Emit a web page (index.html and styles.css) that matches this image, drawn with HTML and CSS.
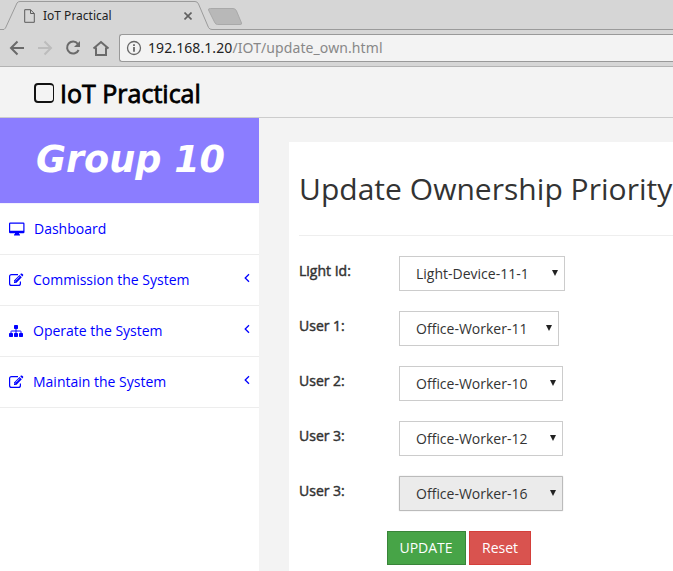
FILE: index.html
```html
<!DOCTYPE html>
<html lang="en">
<head>
<meta charset="utf-8">
<title>IoT Practical</title>
<link rel="stylesheet" href="styles.css">
</head>
<body>
<div class="browser">
  <div class="tabs">
    <svg class="tab-shape" width="673" height="30" viewBox="0 0 673 30" fill="none">
      <path d="M0 29.500H4L5.500 28L17 3Q18 1.500 20 1.500H195Q197.500 1.500 198.500 4L208.500 27.500Q209.500 29.500 212 29.500H673" stroke="#9b9b9b"/>
      <path d="M210.500 8.500H233Q235.500 8.500 236.500 11L241.500 23Q242 24.500 240 24.500H217.500Q215.500 24.500 214.500 22L208.500 10Q208 8.500 210.500 8.500Z" fill="#b8b8b8" stroke="#a9a9a9"/>
    </svg>
    <div class="tab">
      <svg width="11" height="14" viewBox="0 0 11 14" fill="none" stroke="#5c5c5c"><path d="M.7.700H6.500L10.300 4.500V13.300H.7ZM6.500.7V4.500H10.300"/></svg>
      <span class="tab-title">IoT Practical</span>
      <svg class="close" width="8" height="8" viewBox="0 0 8 8" stroke="#606060" stroke-width="1.600"><path d="M.5.500 7.500 7.500M7.500.500.500 7.500"/></svg>
    </div>
  </div>
  <div class="toolbar">
    <svg width="112" height="28" viewBox="0 0 112 28" fill="none" stroke="#6a6a6a" stroke-width="2">
      <path d="M24 14H11M17.500 7.500 11 14 17.500 20.500"/>
      <path stroke="#bcbcbc" d="M38 14H51M44.500 7.500 51 14 44.500 20.500"/>
      <path d="M77.800 9.800A6 6 0 1 0 78.600 16"/>
      <path fill="#6a6a6a" stroke="none" d="M80 7V13H74Z"/>
      <path d="M93.500 14.500 101 8 108.500 14.500M96 13.500V21H106V13.500"/>
    </svg>
    <div class="address">
      <svg width="16" height="16" viewBox="0 0 16 16" fill="none" stroke="#666" stroke-width="1.300"><circle cx="8" cy="8" r="6.500"/><path stroke-width="1.800" d="M8 7V11.700M8 4.200V6"/></svg>
      <span class="url"><b>192.168.1.20</b>/IOT/update_own.html</span>
    </div>
  </div>
</div>
<header class="brand"><i class="box"></i><span>IoT Practical</span></header>
<div class="page">
  <aside class="sidebar">
    <div class="banner"><span>Group 10</span></div>
    <nav>
      <a class="item dash"><svg width="16" height="14" viewBox="0 0 16 14" fill="#00f"><path fill-rule="evenodd" d="M1.200.500H14.300Q15.500.500 15.500 1.700V10Q15.500 11.200 14.300 11.200H10V12.300H11V13.500H5V12.300H6V11.200H1.200Q0 11.200 0 10V1.700Q0 .5 1.200.500ZM1.200 1.700V8.800H14.300V1.700Z"/></svg><span>Dashboard</span></a>
      <a class="item"><svg width="15" height="14" viewBox="0 0 15 14"><path fill="none" stroke="#00f" stroke-width="1.200" d="M9 1.600H2.600Q.600 1.600.600 3.600V10.400Q.600 12.400 2.600 12.400H9.400Q11.400 12.400 11.400 10.400V8.500"/><path fill="#00f" d="M5 7.600 10.500 2 12.800 4.300 7.300 10H5ZM11.200 1.300 12 .6Q12.600.2 13.200.7L14.100 1.600Q14.500 2.200 14 2.800L13.400 3.600Z"/><path stroke="#fff" stroke-width=".7" d="M6.700 7.500 10.700 3.500M5.700 8.300 6.700 9.300"/></svg><span>Commission the System</span><svg class="arrow" width="6" height="10" viewBox="0 0 6 10"><path d="M5 1.200 1.200 5 5 8.800"/></svg></a>
      <a class="item"><svg width="15" height="14" viewBox="0 0 15 14" fill="#00f"><rect x="5" y="1" width="4" height="4" rx=".7"/><rect x="0" y="9" width="4" height="4" rx=".7"/><rect x="5" y="9" width="4" height="4" rx=".7"/><rect x="10" y="9" width="4" height="4" rx=".7"/><path fill="none" stroke="#00f" d="M7 4V10M2 10V7.500Q2 7 2.500 7H11.500Q12 7 12 7.500V10"/></svg><span>Operate the System</span><svg class="arrow" width="6" height="10" viewBox="0 0 6 10"><path d="M5 1.200 1.200 5 5 8.800"/></svg></a>
      <a class="item"><svg width="15" height="14" viewBox="0 0 15 14"><path fill="none" stroke="#00f" stroke-width="1.200" d="M9 1.600H2.600Q.600 1.600.600 3.600V10.400Q.600 12.400 2.600 12.400H9.400Q11.400 12.400 11.400 10.400V8.500"/><path fill="#00f" d="M5 7.600 10.500 2 12.800 4.300 7.300 10H5ZM11.200 1.300 12 .6Q12.600.2 13.200.7L14.100 1.600Q14.500 2.200 14 2.800L13.400 3.600Z"/><path stroke="#fff" stroke-width=".7" d="M6.700 7.500 10.700 3.500M5.700 8.300 6.700 9.300"/></svg><span>Maintain the System</span><svg class="arrow" width="6" height="10" viewBox="0 0 6 10"><path d="M5 1.200 1.200 5 5 8.800"/></svg></a>
    </nav>
  </aside>
  <main class="panel">
    <h1>Update Ownership Priority</h1>
    <div class="row"><label>Light Id:</label><div class="select w-device"><span>Light-Device-11-1</span><i></i></div></div>
    <div class="row"><label>User 1:</label><div class="select w-first"><span>Office-Worker-11</span><i></i></div></div>
    <div class="row"><label>User 2:</label><div class="select"><span>Office-Worker-10</span><i></i></div></div>
    <div class="row"><label>User 3:</label><div class="select"><span>Office-Worker-12</span><i></i></div></div>
    <div class="row"><label>User 3:</label><div class="select active"><span>Office-Worker-16</span><i></i></div></div>
    <div class="actions"><button class="update">UPDATE</button><button class="reset">Reset</button></div>
  </main>
</div>
</body>
</html>
```
FILE: styles.css
```css
* { box-sizing: border-box; }
body { margin: 0; width: 673px; height: 571px; overflow: hidden; background: #f3f3f3; font: 14px/20px "Open Sans", sans-serif; color: #333; }
svg { display: block; flex: none; }
.browser { height: 67px; background: #d6d6d6; border-bottom: 1px solid #b3b3b3; }
.tabs { position: relative; height: 30px; }
.tab-shape { position: absolute; left: 0; top: 0; }
.tab { display: flex; align-items: center; height: 30px; padding: 2px 0 0 24px; }
.tab-title { margin-left: 8px; width: 141px; font: 12px/18px "Noto Sans", sans-serif; color: #222; white-space: nowrap; }
.toolbar { display: flex; padding-top: 4px; }
.address { margin-left: 7px; flex: 1; height: 28px; display: flex; align-items: center; padding-left: 6px; border: 1px solid #999; border-right: 0; border-radius: 3px 0 0 3px; background: #f3f3f3; }
.url { margin-left: 6px; font: 14px/20px "Noto Sans", sans-serif; letter-spacing: .09px; color: #888; white-space: nowrap; }
.url b { font-weight: 400; color: #222; }
.brand { display: flex; align-items: center; height: 51px; padding: 2px 0 0 34px; border-bottom: 1px solid #ccc; color: #000; font-size: 25px; line-height: 36px; }
.brand span { margin-left: 6px; -webkit-text-stroke: .8px #000; white-space: nowrap; }
.box { width: 20px; height: 20px; border: 1.500px solid #111; border-width: 2px 1px 2px 2px; border-radius: 4px; }
.page { display: flex; height: 453px; }
.sidebar { width: 259px; flex: none; background: #fff; }
.banner { height: 86px; padding: 18px 0 0 36px; background: #8b7dff; border-bottom: 1px solid #f3f1ff; color: #fff; font: italic bold 36.6px/48px "DejaVu Sans", sans-serif; white-space: nowrap; }
.item { display: flex; align-items: center; height: 51px; padding: 0 9px; border-bottom: 1px solid #ededed; color: #00f; }
.item span { margin-left: 9px; white-space: nowrap; }
.arrow { margin: -5px 0 0 auto; fill: none; stroke: #00f; stroke-width: 1.3; }
.panel { margin: 24px 0 0 30px; flex: 1; min-width: 0; padding-left: 10px; background: #fff; }
h1 { margin: 0 0 20px; height: 94px; padding-top: 27px; border-bottom: 1px solid #eee; font-size: 30px; line-height: 40px; font-weight: 400; letter-spacing: .03px; white-space: nowrap; }
.row { display: flex; height: 35px; margin-bottom: 20px; }
label { width: 100px; padding-top: 5px; -webkit-text-stroke: .45px #333; }
.select { width: 164px; height: 35px; display: flex; align-items: center; justify-content: space-between; padding: 0 6px 0 16px; border: 1px solid #ccc; white-space: nowrap; }
.select i { border: 3.500px solid transparent; border-top: 6px solid #222; border-bottom: 0; margin-top: -2px; }
.w-device { width: 166px; }
.w-first { width: 160px; }
.active { background: #ebebeb; border-color: #bbb; box-shadow: 0 0 1px #aaa; border-radius: 1px; }
.actions { display: flex; gap: 3px; margin-left: 88px; }
button { height: 34px; padding: 0; border: 1px solid; color: #fff; font: 14px/20px "Open Sans", sans-serif; }
.update { width: 79px; padding-right: 1px; background: #47a447; border-color: #398439; }
.reset { width: 62px; background: #d9534f; border-color: #d43f3a; }
```
